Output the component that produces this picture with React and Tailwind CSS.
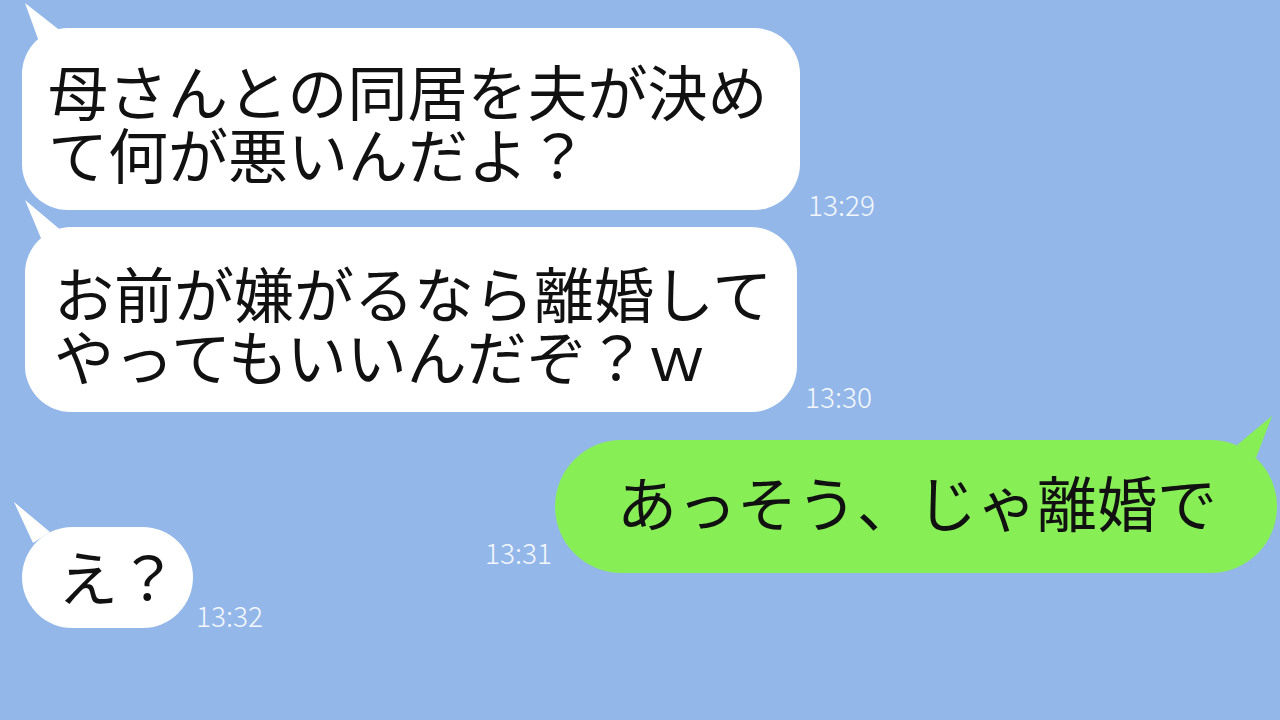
const Tail = ({ className, points, fill }) => (
  <svg className={className} viewBox="0 0 50 60" width="50" height="60">
    <polygon points={points} fill={fill} />
  </svg>
);

const Time = ({ children, className }) => (
  <span
    className={`text-[28px] leading-none font-light text-[#f3f7fd] whitespace-nowrap ${className}`}
  >
    {children}
  </span>
);

export default function App() {
  return (
    <div
      className="w-full h-[720px] overflow-hidden bg-[#93b7e9] flex flex-col text-[#111]"
      style={{ fontFamily: '"Noto Sans CJK JP", "Noto Sans", sans-serif' }}
    >
      {/* 1 */}
      <div className="flex items-end pl-[22px] pt-[28px]">
        <div className="relative bg-white rounded-[46px] w-[778px] h-[182px] pl-[26px] pt-[30px] text-[60px] leading-[63px] whitespace-nowrap">
          <Tail className="absolute left-0 top-[-28px]" points="3,3 40,32 20,50" fill="#fff" />
          <p className="relative">
            母さんとの同居を夫が決め
            <br />
            て何が悪いんだよ？
          </p>
        </div>
        <Time className="ml-[8px] mb-[-8px]">13:29</Time>
      </div>

      {/* 2 */}
      <div className="flex items-end pl-[25px] mt-[17px]">
        <div className="relative bg-white rounded-[46px] w-[772px] h-[185px] pl-[29px] pt-[33px] text-[60px] leading-[63px] whitespace-nowrap">
          <Tail className="absolute left-[-3px] top-[-28px]" points="3,1 41,33 21,44" fill="#fff" />
          <p className="relative">
            お前が嫌がるなら離婚して
            <br />
            やってもいいんだぞ？ｗ
          </p>
        </div>
        <Time className="ml-[8px] mb-[2px]">13:30</Time>
      </div>

      {/* 3 */}
      <div className="flex items-end justify-end pr-[3px] mt-[28px]">
        <Time className="mr-[3px] mb-[7px]">13:31</Time>
        <div className="relative bg-[#87ee56] rounded-full w-[722px] h-[133px] pl-[62px] pb-[12px] flex items-center text-[60px] leading-none whitespace-nowrap">
          <Tail className="absolute right-0 top-[-30px]" points="45,6 10,35 29,48" fill="#87ee56" />
          <span className="relative">あっそう、じゃ離婚で</span>
        </div>
      </div>

      {/* 4 */}
      <div className="flex items-end pl-[22px] mt-[-46px]">
        <div className="relative bg-white rounded-full w-[171px] h-[101px] pl-[36px] pb-[5px] flex items-center text-[60px] leading-none whitespace-nowrap">
          <Tail className="absolute left-[-10px] top-[-25px]" points="2,0 38,30 21,41" fill="#fff" />
          <span className="relative">え？</span>
        </div>
        <Time className="ml-[3px] mb-[-1px]">13:32</Time>
      </div>
    </div>
  );
}
